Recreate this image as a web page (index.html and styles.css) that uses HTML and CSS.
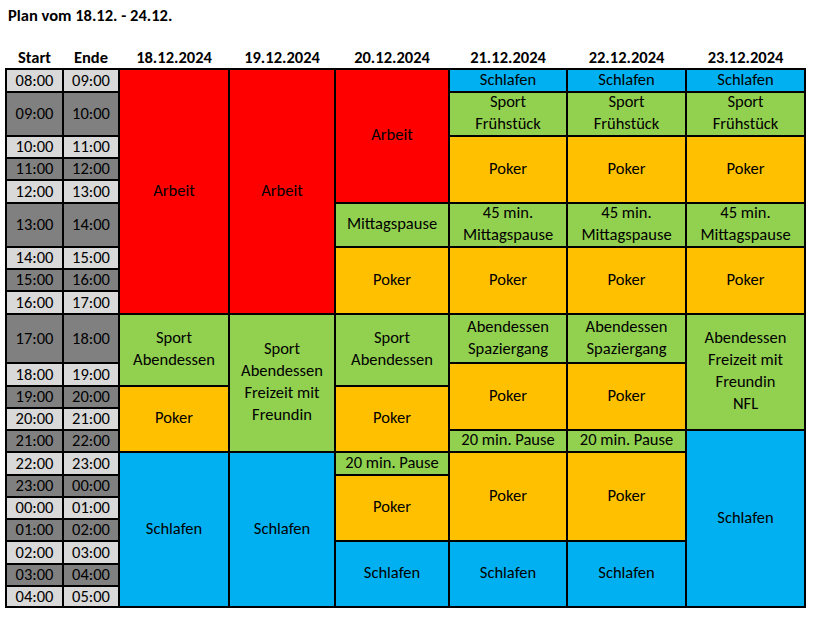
FILE: index.html
```html
<!DOCTYPE html>
<html lang="de">
<head>
<meta charset="utf-8">
<title>Plan vom 18.12. - 24.12.</title>
<link rel="stylesheet" href="styles.css">
</head>
<body>
<div class="page">
  <div class="title">Plan vom 18.12. - 24.12.</div>
  <div class="head">
    <div>Start</div><div>Ende</div><div>18.12.2024</div><div>19.12.2024</div><div>20.12.2024</div><div>21.12.2024</div><div>22.12.2024</div><div>23.12.2024</div>
  </div>
  <div class="plan">
    <!-- 18.12 -->
    <div class="ev red c3 g1-10">Arbeit</div>
    <div class="ev green c3 g10-12">Sport<br>Abendessen</div>
    <div class="ev orange c3 g12-15">Poker</div>
    <div class="ev blue c3 g15-22">Schlafen</div>
    <!-- 19.12 -->
    <div class="ev red c4 g1-10">Arbeit</div>
    <div class="ev green c4 g10-15">Sport<br>Abendessen<br>Freizeit mit<br>Freundin</div>
    <div class="ev blue c4 g15-22">Schlafen</div>
    <!-- 20.12 -->
    <div class="ev red c5 g1-6">Arbeit</div>
    <div class="ev green c5 g6-7">Mittagspause</div>
    <div class="ev orange c5 g7-10">Poker</div>
    <div class="ev green c5 g10-12">Sport<br>Abendessen</div>
    <div class="ev orange c5 g12-15">Poker</div>
    <div class="ev green c5 g15-16">20 min. Pause</div>
    <div class="ev orange c5 g16-19">Poker</div>
    <div class="ev blue c5 g19-22">Schlafen</div>
    <!-- 21.12 -->
    <div class="ev blue c6 g1-2">Schlafen</div>
    <div class="ev green c6 g2-3">Sport<br>Frühstück</div>
    <div class="ev orange c6 g3-6">Poker</div>
    <div class="ev green c6 g6-7">45 min.<br>Mittagspause</div>
    <div class="ev orange c6 g7-10">Poker</div>
    <div class="ev green c6 g10-11">Abendessen<br>Spaziergang</div>
    <div class="ev orange c6 g11-14">Poker</div>
    <div class="ev green c6 g14-15">20 min. Pause</div>
    <div class="ev orange c6 g15-19">Poker</div>
    <div class="ev blue c6 g19-22">Schlafen</div>
    <!-- 22.12 -->
    <div class="ev blue c7 g1-2">Schlafen</div>
    <div class="ev green c7 g2-3">Sport<br>Frühstück</div>
    <div class="ev orange c7 g3-6">Poker</div>
    <div class="ev green c7 g6-7">45 min.<br>Mittagspause</div>
    <div class="ev orange c7 g7-10">Poker</div>
    <div class="ev green c7 g10-11">Abendessen<br>Spaziergang</div>
    <div class="ev orange c7 g11-14">Poker</div>
    <div class="ev green c7 g14-15">20 min. Pause</div>
    <div class="ev orange c7 g15-19">Poker</div>
    <div class="ev blue c7 g19-22">Schlafen</div>
    <!-- 23.12 -->
    <div class="ev blue c8 g1-2">Schlafen</div>
    <div class="ev green c8 g2-3">Sport<br>Frühstück</div>
    <div class="ev orange c8 g3-6">Poker</div>
    <div class="ev green c8 g6-7">45 min.<br>Mittagspause</div>
    <div class="ev orange c8 g7-10">Poker</div>
    <div class="ev green c8 g10-14">Abendessen<br>Freizeit mit<br>Freundin<br>NFL</div>
    <div class="ev blue c8 g14-22">Schlafen</div>

    <!-- time column (auto-placed into columns 1-2) -->
    <div class="t light">08:00</div><div class="t light">09:00</div>
    <div class="t dark">09:00</div><div class="t dark">10:00</div>
    <div class="t light">10:00</div><div class="t light">11:00</div>
    <div class="t dark">11:00</div><div class="t dark">12:00</div>
    <div class="t light">12:00</div><div class="t light">13:00</div>
    <div class="t dark">13:00</div><div class="t dark">14:00</div>
    <div class="t light">14:00</div><div class="t light">15:00</div>
    <div class="t dark">15:00</div><div class="t dark">16:00</div>
    <div class="t light">16:00</div><div class="t light">17:00</div>
    <div class="t dark">17:00</div><div class="t dark">18:00</div>
    <div class="t light">18:00</div><div class="t light">19:00</div>
    <div class="t dark">19:00</div><div class="t dark">20:00</div>
    <div class="t light">20:00</div><div class="t light">21:00</div>
    <div class="t dark">21:00</div><div class="t dark">22:00</div>
    <div class="t light">22:00</div><div class="t light">23:00</div>
    <div class="t dark">23:00</div><div class="t dark">00:00</div>
    <div class="t light">00:00</div><div class="t light">01:00</div>
    <div class="t dark">01:00</div><div class="t dark">02:00</div>
    <div class="t light">02:00</div><div class="t light">03:00</div>
    <div class="t dark">03:00</div><div class="t dark">04:00</div>
    <div class="t light">04:00</div><div class="t light">05:00</div>
  </div>
</div>
</body>
</html>
```
FILE: styles.css
```css
html, body {
  margin: 0;
  padding: 0;
  background: #ffffff;
}
body {
  font-family: Carlito, Calibri, Roboto, sans-serif;
  font-size: 16.5px;
  color: #000000;
}
.page {
  padding: 4px 0 0 5px;
}
.title {
  font-weight: bold;
  line-height: 22px;
  padding-left: 3px;
  height: 22px;
}
.head {
  margin-top: 20px;
  display: grid;
  grid-template-columns: 55px 54px 108px 104px 112px 116px 117px 117px;
  column-gap: 2px;
  padding: 0 2px;
  width: 797px;
  height: 22px;
  line-height: 22px;
  font-weight: bold;
  text-align: center;
}
.plan {
  display: grid;
  grid-template-columns: 55px 54px 108px 104px 112px 116px 117px 117px;
  grid-template-rows: 21px 42px 20px 20px 21px 42px 20px 20px 21px 47px 21px 20px 20px 20px 21px 20px 20px 20px 21px 20px 19px;
  gap: 2px;
  padding: 2px;
  background: #000000;
  width: 797px;
}
.ev, .t {
  display: flex;
  align-items: center;
  justify-content: center;
  text-align: center;
  line-height: 22px;
  white-space: nowrap;
  box-sizing: border-box;
}
.ev { padding-bottom: 4px; }
.t { padding-bottom: 2px; }
.t.light { background: #d9d9d9; }
.t.dark { background: #808080; }
.red { background: #ff0000; }
.green { background: #92d050; }
.orange { background: #ffc000; }
.blue { background: #00b0f0; }

.c3 { grid-column: 3; }
.c4 { grid-column: 4; }
.c5 { grid-column: 5; }
.c6 { grid-column: 6; }
.c7 { grid-column: 7; }
.c8 { grid-column: 8; }

.g1-2 { grid-row: 1 / 2; }
.g1-6 { grid-row: 1 / 6; }
.g1-10 { grid-row: 1 / 10; }
.g2-3 { grid-row: 2 / 3; }
.g3-6 { grid-row: 3 / 6; }
.g6-7 { grid-row: 6 / 7; }
.g7-10 { grid-row: 7 / 10; }
.g10-11 { grid-row: 10 / 11; }
.g10-12 { grid-row: 10 / 12; }
.g10-14 { grid-row: 10 / 14; }
.g10-15 { grid-row: 10 / 15; }
.g11-14 { grid-row: 11 / 14; }
.g12-15 { grid-row: 12 / 15; }
.g14-15 { grid-row: 14 / 15; }
.g14-22 { grid-row: 14 / 22; }
.g15-16 { grid-row: 15 / 16; }
.g15-19 { grid-row: 15 / 19; }
.g15-22 { grid-row: 15 / 22; }
.g16-19 { grid-row: 16 / 19; }
.g19-22 { grid-row: 19 / 22; }
```
